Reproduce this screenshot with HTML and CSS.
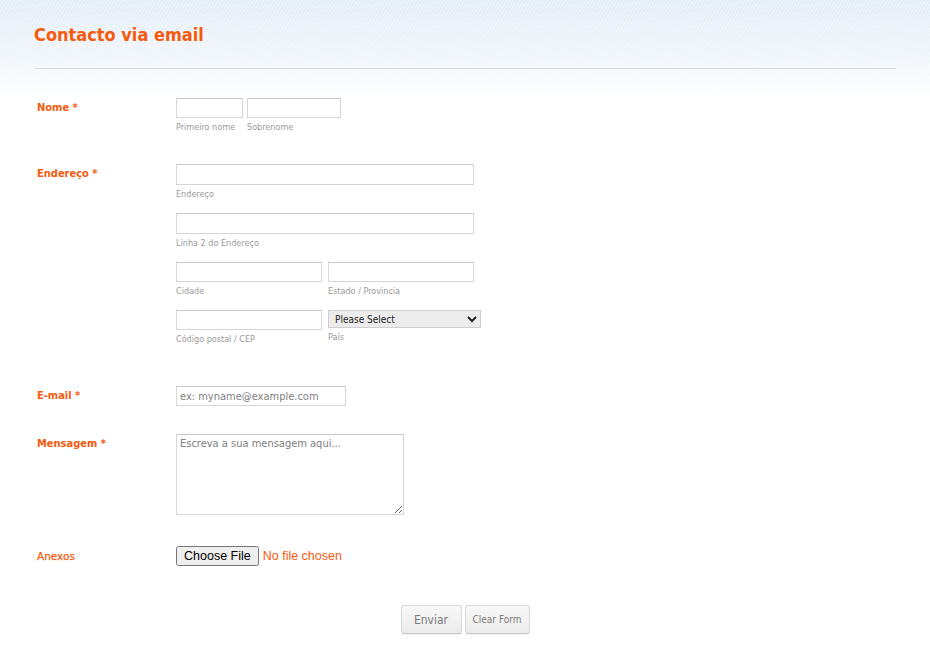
FILE: index.html
```html
<!DOCTYPE html>
<html lang="pt">
<head>
<meta charset="utf-8">
<title>Contacto via email</title>
<link rel="stylesheet" href="styles.css">
</head>
<body>
<div class="page">
  <header class="header">
    <h1 class="title">Contacto via email</h1>
  </header>
  <form class="form">
    <div class="row row-nome">
      <label class="label">Nome <span class="req">*</span></label>
      <div class="controls">
        <div class="line">
          <div class="field"><input class="input w-first" type="text"><span class="sub">Primeiro nome</span></div>
          <div class="field"><input class="input w-last" type="text"><span class="sub">Sobrenome</span></div>
        </div>
      </div>
    </div>

    <div class="row row-end">
      <label class="label">Endereço <span class="req">*</span></label>
      <div class="controls">
        <div class="line">
          <div class="field"><input class="input w-addr" type="text"><span class="sub">Endereço</span></div>
        </div>
        <div class="line">
          <div class="field"><input class="input w-addr" type="text"><span class="sub">Linha 2 do Endereço</span></div>
        </div>
        <div class="line gap6">
          <div class="field"><input class="input w-half" type="text"><span class="sub">Cidade</span></div>
          <div class="field"><input class="input w-half" type="text"><span class="sub">Estado / Provincia</span></div>
        </div>
        <div class="line gap6 last">
          <div class="field"><input class="input w-half" type="text"><span class="sub">Código postal / CEP</span></div>
          <div class="field"><select class="select"><option>Please Select</option></select><span class="sub sub-sel">País</span></div>
        </div>
      </div>
    </div>

    <div class="row row-email">
      <label class="label">E-mail <span class="req">*</span></label>
      <div class="controls">
        <input class="input w-email" type="email" placeholder="ex: myname@example.com">
      </div>
    </div>

    <div class="row row-msg">
      <label class="label">Mensagem <span class="req">*</span></label>
      <div class="controls">
        <textarea class="textarea" placeholder="Escreva a sua mensagem aqui..."></textarea>
      </div>
    </div>

    <div class="row row-file">
      <label class="label label-light">Anexos</label>
      <div class="controls">
        <input class="file" type="file">
      </div>
    </div>

    <div class="buttons">
      <button type="button" class="btn btn-send">Enviar</button>
      <button type="reset" class="btn btn-clear">Clear Form</button>
    </div>
  </form>
</div>
</body>
</html>
```

FILE: styles.css
```css
html, body {
  margin: 0;
  padding: 0;
  background: #fff;
}
body {
  font-family: "DejaVu Sans Condensed", "DejaVu Sans", sans-serif;
  background:
    repeating-linear-gradient(120deg, rgba(255,255,255,0.35) 0 1px, rgba(255,255,255,0) 1px 3px),
    linear-gradient(180deg, #e3edf8 0px, #eef4fa 45px, #f8fbfd 80px, #ffffff 100px);
  background-repeat: no-repeat;
  background-size: 100% 100px;
  min-height: 656px;
}
.page {
  padding: 0 34px;
}
.header {
  height: 69px;
  border-bottom: 1px solid #dcdfe2;
  box-sizing: border-box;
  padding-top: 23px;
}
.title {
  margin: 0;
  font-size: 18px;
  font-weight: bold;
  color: #f55a0e;
  line-height: 24px;
}
.form {
  padding-top: 29px;
}
.row {
  display: flex;
}
.label {
  width: 142px;
  padding-left: 3px;
  box-sizing: border-box;
  flex: none;
  font-size: 11px;
  font-weight: bold;
  color: #f55a0e;
  padding-top: 3px;
  line-height: 14px;
}
.label-light {
  font-family: "DejaVu Sans", sans-serif;
  font-weight: normal;
  font-size: 10.5px;
  -webkit-text-stroke: 0.25px #f55a0e;
}
.req {
  color: #f55a0e;
}
.controls {
  display: flex;
  flex-direction: column;
}
.line {
  display: flex;
  gap: 4px;
  margin-bottom: 13px;
}
.line.gap6 {
  gap: 6px;
}
.line.last {
  margin-bottom: 0;
}
.row-nome .line {
  margin-bottom: 0;
}
.row-nome { margin-bottom: 31px; }
.row-end { margin-bottom: 41px; }
.row-email { margin-bottom: 28px; }
.row-msg { margin-bottom: 31px; }
.row-file { margin-bottom: 39px; }
.field {
  display: flex;
  flex-direction: column;
}
.input {
  height: 20px;
  box-sizing: border-box;
  border: 1px solid #d6d6d6;
  border-top-color: #c9c9c9;
  background: #fff;
  padding: 0 3px;
  margin: 0;
  font-family: "DejaVu Sans Condensed", "DejaVu Sans", sans-serif;
  font-size: 11px;
  color: #555;
  outline: none;
}
.input::placeholder, .textarea::placeholder {
  color: #808080;
}
.w-first { width: 67px; }
.w-last { width: 94px; }
.w-addr { width: 298px; height: 21px; }
.w-half { width: 146px; }
.w-email { width: 170px; }
.sub {
  font-size: 9px;
  line-height: 12px;
  margin-top: 3px;
  color: #9a9a9a;
}
.select {
  width: 153px;
  height: 18px;
  box-sizing: border-box;
  border: 1px solid #cfcfcf;
  background-color: #ececec;
  font-family: "DejaVu Sans Condensed", "DejaVu Sans", sans-serif;
  font-size: 10px;
  color: #222;
  margin: 0;
  padding: 0 2px;
}
.select + .sub-sel {
  margin-top: 3px;
}
.textarea {
  width: 228px;
  height: 81px;
  box-sizing: border-box;
  border: 1px solid #d6d6d6;
  border-top-color: #c9c9c9;
  margin: 0;
  padding: 2px 3px;
  font-family: "DejaVu Sans Condensed", "DejaVu Sans", sans-serif;
  font-size: 11px;
  line-height: 14px;
  color: #555;
  outline: none;
}
.file {
  font-family: "Liberation Sans", Arial, sans-serif;
  font-size: 12.5px;
  color: #f55a0e;
  margin: 0;
}
.buttons {
  display: flex;
  justify-content: center;
  gap: 3px;
}
.btn {
  height: 29px;
  box-sizing: border-box;
  border: 1px solid #d9d9d9;
  border-bottom-color: #c6c6c6;
  border-radius: 3px;
  background: linear-gradient(180deg, #f8f8f8, #ebebeb);
  color: #7a7a7a;
  font-family: "DejaVu Sans Condensed", "DejaVu Sans", sans-serif;
  padding: 0;
  box-shadow: 0 1px 1px rgba(0,0,0,0.06);
}
.btn-send {
  width: 61px;
  font-size: 12px;
}
.btn-clear {
  width: 65px;
  font-size: 10px;
}
```
